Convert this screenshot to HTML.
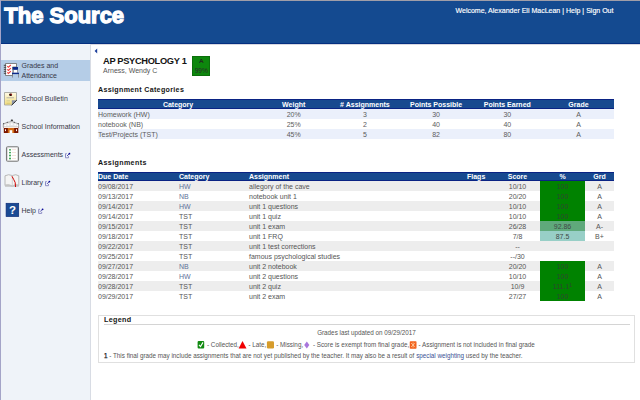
<!DOCTYPE html>
<html><head><meta charset="utf-8">
<style>
*{margin:0;padding:0;box-sizing:border-box}
html,body{width:640px;height:400px;overflow:hidden;background:#fff;font-family:"Liberation Sans",sans-serif;color:#444}
.a{position:absolute;white-space:nowrap}
#frameT{position:absolute;left:0;top:0;width:640px;height:1px;background:#a09ea8}
#frameL{position:absolute;left:0;top:0;width:1px;height:400px;background:#a4a4c8}
#hdr{position:absolute;left:1px;top:1px;width:639px;height:43px;background:#144a90;border-bottom:1px solid #042f80}
#hsh{position:absolute;left:91px;top:44px;width:549px;height:1px;background:#d8d8e0}
#logo{left:4.3px;top:3px;font-size:22px;line-height:26px;font-weight:bold;color:#fff;-webkit-text-stroke:1.3px #fff}
#welcome{left:455.5px;top:6.3px;font-size:7.03px;line-height:9px;color:#fff;-webkit-text-stroke:0.15px #fff}
#side{position:absolute;left:1px;top:44px;width:89px;height:356px;background:#eff3f9}
#sideB{position:absolute;left:90px;top:44px;width:1px;height:356px;background:#d8dce4}
#act{position:absolute;left:1px;top:60px;width:89px;height:20.5px;background:#b5cde7}
.nt{font-size:7px;line-height:10px;color:#383848;left:21.5px}
th,td{padding:0}
.hd{position:absolute;background:#17498f;border-top:1px solid #0a2384;border-bottom:1px solid #0a2384;color:#fff;font-weight:bold;font-size:7px}
.c{position:absolute;text-align:center;font-size:7px;white-space:nowrap}
.l{position:absolute;text-align:left;font-size:7px;white-space:nowrap}
.row{position:absolute}
.lnk{color:#5f7399}
</style></head><body>
<div id="frameT"></div><div id="frameL"></div>
<div id="hdr"></div><div id="hsh"></div>
<div class="a" id="logo">The Source</div>
<div class="a" id="welcome">Welcome, Alexander Eli MacLean | Help | Sign Out</div>
<div id="side"></div><div id="sideB"></div>
<div id="act"></div>

<div class="a nt" style="top:61.3px">Grades and</div>
<div class="a nt" style="top:71.3px">Attendance</div>
<div class="a nt" style="top:93.5px">School Bulletin</div>
<div class="a nt" style="top:121.5px">School Information</div>
<div class="a nt" style="top:149.5px">Assessments</div>
<div class="a nt" style="top:177.5px">Library</div>
<div class="a nt" style="top:205.5px">Help</div>
<svg class="a" style="left:0;top:0" width="640" height="400" viewBox="0 0 640 400">
<!-- grades icon -->
<path d="M5.5 63.5 H16.5 V67 H12.5 V75.5 H5.5 Z" fill="#fff" stroke="#6a6a6a" stroke-width="0.8"/>
<g stroke="#444" stroke-width="1">
<line x1="3.8" y1="65.3" x2="6.2" y2="65.3"/><line x1="3.8" y1="67.3" x2="6.2" y2="67.3"/><line x1="3.8" y1="69.3" x2="6.2" y2="69.3"/><line x1="3.8" y1="71.3" x2="6.2" y2="71.3"/><line x1="3.8" y1="73.3" x2="6.2" y2="73.3"/>
</g>
<g stroke="#f03c3c" stroke-width="1.15" fill="none">
<path d="M7.3 66.2 L8.4 67.3 L10.8 65"/><path d="M7.3 69.4 L8.4 70.5 L10.8 68.2"/><path d="M7.3 72.4 L8.4 73.5 L10.8 71.2"/>
</g>
<rect x="12.6" y="69.8" width="5.2" height="3" fill="#fff"/>
<rect x="12.8" y="67" width="5.2" height="2.8" fill="#0c2a8a"/>
<rect x="13" y="69.8" width="0.8" height="3" fill="#888"/><rect x="17" y="69.8" width="0.8" height="3" fill="#888"/>
<rect x="12" y="72.7" width="7" height="1.4" fill="#0c2a8a"/>
<rect x="12.2" y="74" width="0.7" height="3.6" fill="#777"/><rect x="18" y="74" width="0.7" height="3.6" fill="#777"/>
<!-- bulletin -->
<defs><linearGradient id="yl" x1="0" y1="0" x2="0" y2="1"><stop offset="0" stop-color="#fffbe8"/><stop offset="1" stop-color="#f2dd7a"/></linearGradient></defs>
<path d="M4.5 92.5 H16.5 V100.5 L12 105 H4.5 Z" fill="url(#yl)" stroke="#a8a8a0" stroke-width="0.9"/>
<path d="M16.5 100.3 L11.8 105 L11.8 100.3 Z" fill="#8c94a8"/>
<path d="M16.8 100.2 L11.6 105.2" stroke="#222" stroke-width="0.9"/>
<ellipse cx="10.6" cy="94.8" rx="1.5" ry="1.2" fill="#2a0404"/><circle cx="11.3" cy="94.3" r="0.6" fill="#d02020"/>
<rect x="6.5" y="97.2" width="7.5" height="1.1" fill="#bdb8a8"/>
<rect x="6.5" y="100.4" width="3.5" height="0.9" fill="#d0c890"/>
<rect x="6.5" y="102.8" width="4" height="0.8" fill="#d0c070"/>
<!-- school -->
<ellipse cx="11.9" cy="120.3" rx="1.2" ry="0.8" fill="#222"/>
<path d="M3.3 127.2 V123.9 L7.2 122.4 L11.9 121.4 L14.6 122.4 L18.6 123.9 V127.2 Z" fill="#e6e6e6" stroke="#8c8c8c" stroke-width="0.7"/>
<g fill="#fff"><rect x="4.5" y="124.6" width="1.6" height="1.5"/><rect x="7.6" y="124" width="1.6" height="1.5"/><rect x="10.9" y="123.4" width="1.8" height="1.5"/><rect x="14.4" y="124" width="1.6" height="1.5"/><rect x="16.8" y="124.6" width="1.2" height="1.5"/></g>
<g fill="#555"><circle cx="3.6" cy="123.7" r="0.65"/><circle cx="7.3" cy="122.3" r="0.65"/><circle cx="14.3" cy="122.3" r="0.65"/><circle cx="18.3" cy="123.7" r="0.65"/></g>
<rect x="3.8" y="127" width="14.5" height="6" fill="#7a1600"/>
<rect x="7.8" y="128" width="6.4" height="5" fill="#d26a12"/>
<rect x="4" y="126.8" width="14" height="1.2" fill="#f6eee8"/>
<g fill="#fff"><rect x="5" y="129.3" width="1" height="1.8"/><rect x="16" y="129.3" width="1" height="1.8"/><rect x="9.6" y="130.2" width="2.7" height="2.8"/></g>
<!-- assessments -->
<rect x="6.5" y="146.8" width="12" height="14.5" rx="1.5" fill="#fff" stroke="#7a7a7a" stroke-width="1.1"/>
<rect x="7.6" y="147.8" width="9.8" height="12.5" fill="none" stroke="#ccc" stroke-width="0.6"/>
<g fill="#1a9a3a"><circle cx="10" cy="149.8" r="0.9"/><circle cx="10" cy="152.6" r="0.9"/><circle cx="10" cy="155.5" r="0.9"/><circle cx="10" cy="158.5" r="0.9"/></g>
<g fill="#f4dcd6"><rect x="12" y="149.3" width="4" height="0.8"/><rect x="12" y="152.2" width="4" height="0.8"/><rect x="12" y="155" width="4" height="0.8"/><rect x="12" y="158" width="4" height="0.8"/></g>
<!-- library -->
<path d="M5 175.8 Q8.5 173.8 12.3 175.5 Q16 173.8 18.8 175.8 L18.8 185.5 Q15.5 184.5 12.3 186.2 Q8.8 184.5 5 185.5 Z" fill="#f4f4f4" stroke="#b0b0b0" stroke-width="0.9"/>
<path d="M5 184.5 Q8.8 183.5 12.3 185.5 Q15.5 183.5 18.8 184.5 L18.8 186.8 L5 186.8 Z" fill="#c4c4c4"/>
<line x1="12.3" y1="175.5" x2="12.3" y2="185.5" stroke="#c8c8c8" stroke-width="0.8"/>
<path d="M12 176.3 Q14 180 15.2 182.5 L15.5 187" stroke="#d00000" stroke-width="1" fill="none"/>
<!-- help -->
<rect x="6.1" y="203.3" width="12.6" height="13.2" fill="#1a4a94" stroke="#0c2c78" stroke-width="0.7"/>
<text x="12.4" y="214.2" text-anchor="middle" font-family="Liberation Sans" font-weight="bold" font-size="11.5" fill="#fff">?</text>
<!-- external link icons -->
<g transform="translate(65,153.2)">
<path d="M1.8 0.5 H0.5 V4.6 H3.5 V3" fill="none" stroke="#8c8cc4" stroke-width="1"/>
<path d="M2 2.8 L4.5 0.3" stroke="#3a3aa0" stroke-width="0.9"/><circle cx="4.4" cy="0.5" r="0.9" fill="#0a0a9a"/>
</g>
<g transform="translate(45,181.1)">
<path d="M1.8 0.5 H0.5 V4.6 H3.5 V3" fill="none" stroke="#8c8cc4" stroke-width="1"/>
<path d="M2 2.8 L4.5 0.3" stroke="#3a3aa0" stroke-width="0.9"/><circle cx="4.4" cy="0.5" r="0.9" fill="#0a0a9a"/>
</g>
<g transform="translate(38.2,208.8)">
<path d="M1.8 0.5 H0.5 V4.6 H3.5 V3" fill="none" stroke="#8c8cc4" stroke-width="1"/>
<path d="M2 2.8 L4.5 0.3" stroke="#3a3aa0" stroke-width="0.9"/><circle cx="4.4" cy="0.5" r="0.9" fill="#0a0a9a"/>
</g>
</svg>
<svg class="a" style="left:94px;top:48px" width="4" height="6" viewBox="0 0 4 6"><path d="M3.2 0.6 L0.6 3 L3.2 5.4 Z" fill="#1d3f9c"/></svg>
<div class="a" style="left:103px;top:55.5px;font-size:9.3px;letter-spacing:-0.33px;line-height:10px;font-weight:bold;color:#151515">AP PSYCHOLOGY 1</div>
<div class="a" style="left:103px;top:65.5px;font-size:7px;line-height:9px;color:#555">Arness, Wendy C</div>
<div class="a" style="left:192px;top:56px;width:18.3px;height:19.8px;background:#0d870d;border:1px solid #0b6f0b"></div>
<div class="a" style="left:192px;top:56.5px;width:18.5px;text-align:center;font-size:6.2px;line-height:7px;color:#222;-webkit-text-stroke:0.2px #222">A</div>
<div class="a" style="left:192px;top:66.5px;width:18.5px;text-align:center;font-size:6.6px;line-height:7px;color:#2a2a2a">99%</div>
<div class="a" style="left:98px;top:85.5px;font-size:7.1px;letter-spacing:0.33px;line-height:9px;font-weight:bold;color:#151515">Assignment Categories</div>
<div class="hd" style="left:98px;top:99px;width:516px;height:10px"></div>
<div class="c" style="left:98px;top:99.6px;width:160.1px;line-height:10px;color:#fff;font-weight:bold">Category</div>
<div class="c" style="left:258.1px;top:99.6px;width:71.2px;line-height:10px;color:#fff;font-weight:bold">Weight</div>
<div class="c" style="left:329.3px;top:99.6px;width:71.2px;line-height:10px;color:#fff;font-weight:bold"># Assignments</div>
<div class="c" style="left:400.5px;top:99.6px;width:71.2px;line-height:10px;color:#fff;font-weight:bold">Points Possible</div>
<div class="c" style="left:471.7px;top:99.6px;width:71.2px;line-height:10px;color:#fff;font-weight:bold">Points Earned</div>
<div class="c" style="left:542.9px;top:99.6px;width:71.2px;line-height:10px;color:#fff;font-weight:bold">Grade</div>
<div class="row" style="left:98px;top:109.0px;width:516px;height:9.85px;background:#ebf0fb"></div>
<div class="l" style="left:98px;top:109.8px;line-height:9.85px;color:#5c5c5c">Homework (HW)</div>
<div class="c" style="left:258.1px;top:109.8px;width:71.2px;line-height:9.85px;color:#5c5c5c">20%</div>
<div class="c" style="left:329.3px;top:109.8px;width:71.2px;line-height:9.85px;color:#5c5c5c">3</div>
<div class="c" style="left:400.5px;top:109.8px;width:71.2px;line-height:9.85px;color:#5c5c5c">30</div>
<div class="c" style="left:471.7px;top:109.8px;width:71.2px;line-height:9.85px;color:#5c5c5c">30</div>
<div class="c" style="left:542.9px;top:109.8px;width:71.2px;line-height:9.85px;color:#5c5c5c">A</div>
<div class="row" style="left:98px;top:118.8px;width:516px;height:9.85px;background:#ffffff"></div>
<div class="l" style="left:98px;top:119.6px;line-height:9.85px;color:#5c5c5c">notebook (NB)</div>
<div class="c" style="left:258.1px;top:119.6px;width:71.2px;line-height:9.85px;color:#5c5c5c">25%</div>
<div class="c" style="left:329.3px;top:119.6px;width:71.2px;line-height:9.85px;color:#5c5c5c">2</div>
<div class="c" style="left:400.5px;top:119.6px;width:71.2px;line-height:9.85px;color:#5c5c5c">40</div>
<div class="c" style="left:471.7px;top:119.6px;width:71.2px;line-height:9.85px;color:#5c5c5c">40</div>
<div class="c" style="left:542.9px;top:119.6px;width:71.2px;line-height:9.85px;color:#5c5c5c">A</div>
<div class="row" style="left:98px;top:128.7px;width:516px;height:9.85px;background:#ebf0fb"></div>
<div class="l" style="left:98px;top:129.5px;line-height:9.85px;color:#5c5c5c">Test/Projects (TST)</div>
<div class="c" style="left:258.1px;top:129.5px;width:71.2px;line-height:9.85px;color:#5c5c5c">45%</div>
<div class="c" style="left:329.3px;top:129.5px;width:71.2px;line-height:9.85px;color:#5c5c5c">5</div>
<div class="c" style="left:400.5px;top:129.5px;width:71.2px;line-height:9.85px;color:#5c5c5c">82</div>
<div class="c" style="left:471.7px;top:129.5px;width:71.2px;line-height:9.85px;color:#5c5c5c">80</div>
<div class="c" style="left:542.9px;top:129.5px;width:71.2px;line-height:9.85px;color:#5c5c5c">A</div>
<div class="a" style="left:98px;top:159px;font-size:7.1px;letter-spacing:0.38px;line-height:9px;font-weight:bold;color:#151515">Assignments</div>
<div class="hd" style="left:98px;top:172px;width:516px;height:9px"></div>
<div class="l" style="left:98px;top:172px;line-height:9px;color:#fff;font-weight:bold">Due Date</div>
<div class="l" style="left:179px;top:172px;line-height:9px;color:#fff;font-weight:bold">Category</div>
<div class="l" style="left:249px;top:172px;line-height:9px;color:#fff;font-weight:bold">Assignment</div>
<div class="l" style="left:467px;top:172px;line-height:9px;color:#fff;font-weight:bold">Flags</div>
<div class="c" style="left:500px;top:172px;width:35px;line-height:9px;color:#fff;font-weight:bold">Score</div>
<div class="c" style="left:540px;top:172px;width:45px;line-height:9px;color:#fff;font-weight:bold">%</div>
<div class="c" style="left:585px;top:172px;width:29px;line-height:9px;color:#fff;font-weight:bold">Grd</div>
<div class="row" style="left:98px;top:181.00px;width:516px;height:10.0px;background:#ededed"></div>
<div class="row" style="left:540px;top:181.00px;width:45px;height:10.0px;background:#008200"></div>
<div class="l" style="left:98px;top:182.00px;line-height:10.0px;color:#555">09/08/2017</div>
<div class="l lnk" style="left:179px;top:182.00px;line-height:10.0px;">HW</div>
<div class="l" style="left:249px;top:182.00px;line-height:10.0px;color:#555">allegory of the cave</div>
<div class="c" style="left:500px;top:182.00px;width:35px;line-height:10.0px;color:#555">10/10</div>
<div class="c" style="left:540px;top:182.00px;width:45px;line-height:10.0px;color:#2f452f">100</div>
<div class="c" style="left:585px;top:182.00px;width:29px;line-height:10.0px;color:#555">A</div>
<div class="row" style="left:98px;top:191.00px;width:516px;height:10.0px;background:#ffffff"></div>
<div class="row" style="left:540px;top:191.00px;width:45px;height:10.0px;background:#008200"></div>
<div class="l" style="left:98px;top:192.00px;line-height:10.0px;color:#555">09/13/2017</div>
<div class="l lnk" style="left:179px;top:192.00px;line-height:10.0px;">NB</div>
<div class="l" style="left:249px;top:192.00px;line-height:10.0px;color:#555">notebook unit 1</div>
<div class="c" style="left:500px;top:192.00px;width:35px;line-height:10.0px;color:#555">20/20</div>
<div class="c" style="left:540px;top:192.00px;width:45px;line-height:10.0px;color:#2f452f">100</div>
<div class="c" style="left:585px;top:192.00px;width:29px;line-height:10.0px;color:#555">A</div>
<div class="row" style="left:98px;top:201.00px;width:516px;height:10.0px;background:#ededed"></div>
<div class="row" style="left:540px;top:201.00px;width:45px;height:10.0px;background:#008200"></div>
<div class="l" style="left:98px;top:202.00px;line-height:10.0px;color:#555">09/14/2017</div>
<div class="l lnk" style="left:179px;top:202.00px;line-height:10.0px;">HW</div>
<div class="l" style="left:249px;top:202.00px;line-height:10.0px;color:#555">unit 1 questions</div>
<div class="c" style="left:500px;top:202.00px;width:35px;line-height:10.0px;color:#555">10/10</div>
<div class="c" style="left:540px;top:202.00px;width:45px;line-height:10.0px;color:#2f452f">100</div>
<div class="c" style="left:585px;top:202.00px;width:29px;line-height:10.0px;color:#555">A</div>
<div class="row" style="left:98px;top:211.00px;width:516px;height:10.0px;background:#ffffff"></div>
<div class="row" style="left:540px;top:211.00px;width:45px;height:10.0px;background:#008200"></div>
<div class="l" style="left:98px;top:212.00px;line-height:10.0px;color:#555">09/14/2017</div>
<div class="l" style="left:179px;top:212.00px;line-height:10.0px;color:#555">TST</div>
<div class="l" style="left:249px;top:212.00px;line-height:10.0px;color:#555">unit 1 quiz</div>
<div class="c" style="left:500px;top:212.00px;width:35px;line-height:10.0px;color:#555">10/10</div>
<div class="c" style="left:540px;top:212.00px;width:45px;line-height:10.0px;color:#2f452f">100</div>
<div class="c" style="left:585px;top:212.00px;width:29px;line-height:10.0px;color:#555">A</div>
<div class="row" style="left:98px;top:221.00px;width:516px;height:10.0px;background:#ededed"></div>
<div class="row" style="left:540px;top:221.00px;width:45px;height:10.0px;background:#5fa97b"></div>
<div class="l" style="left:98px;top:222.00px;line-height:10.0px;color:#555">09/15/2017</div>
<div class="l" style="left:179px;top:222.00px;line-height:10.0px;color:#555">TST</div>
<div class="l" style="left:249px;top:222.00px;line-height:10.0px;color:#555">unit 1 exam</div>
<div class="c" style="left:500px;top:222.00px;width:35px;line-height:10.0px;color:#555">26/28</div>
<div class="c" style="left:540px;top:222.00px;width:45px;line-height:10.0px;color:#404848">92.86</div>
<div class="c" style="left:585px;top:222.00px;width:29px;line-height:10.0px;color:#555">A-</div>
<div class="row" style="left:98px;top:231.00px;width:516px;height:10.0px;background:#ffffff"></div>
<div class="row" style="left:540px;top:231.00px;width:45px;height:10.0px;background:#98cfc7"></div>
<div class="l" style="left:98px;top:232.00px;line-height:10.0px;color:#555">09/18/2017</div>
<div class="l" style="left:179px;top:232.00px;line-height:10.0px;color:#555">TST</div>
<div class="l" style="left:249px;top:232.00px;line-height:10.0px;color:#555">unit 1 FRQ</div>
<div class="c" style="left:500px;top:232.00px;width:35px;line-height:10.0px;color:#555">7/8</div>
<div class="c" style="left:540px;top:232.00px;width:45px;line-height:10.0px;color:#404848">87.5</div>
<div class="c" style="left:585px;top:232.00px;width:29px;line-height:10.0px;color:#555">B+</div>
<div class="row" style="left:98px;top:241.00px;width:516px;height:10.0px;background:#ededed"></div>
<div class="l" style="left:98px;top:242.00px;line-height:10.0px;color:#555">09/22/2017</div>
<div class="l" style="left:179px;top:242.00px;line-height:10.0px;color:#555">TST</div>
<div class="l" style="left:249px;top:242.00px;line-height:10.0px;color:#555">unit 1 test corrections</div>
<div class="c" style="left:500px;top:242.00px;width:35px;line-height:10.0px;color:#555">--</div>
<div class="row" style="left:98px;top:251.00px;width:516px;height:10.0px;background:#ffffff"></div>
<div class="l" style="left:98px;top:252.00px;line-height:10.0px;color:#555">09/25/2017</div>
<div class="l" style="left:179px;top:252.00px;line-height:10.0px;color:#555">TST</div>
<div class="l" style="left:249px;top:252.00px;line-height:10.0px;color:#555">famous psychological studies</div>
<div class="c" style="left:500px;top:252.00px;width:35px;line-height:10.0px;color:#555">--/30</div>
<div class="row" style="left:98px;top:261.00px;width:516px;height:10.0px;background:#ededed"></div>
<div class="row" style="left:540px;top:261.00px;width:45px;height:10.0px;background:#008200"></div>
<div class="l" style="left:98px;top:262.00px;line-height:10.0px;color:#555">09/27/2017</div>
<div class="l lnk" style="left:179px;top:262.00px;line-height:10.0px;">NB</div>
<div class="l" style="left:249px;top:262.00px;line-height:10.0px;color:#555">unit 2 notebook</div>
<div class="c" style="left:500px;top:262.00px;width:35px;line-height:10.0px;color:#555">20/20</div>
<div class="c" style="left:540px;top:262.00px;width:45px;line-height:10.0px;color:#2f452f">100</div>
<div class="c" style="left:585px;top:262.00px;width:29px;line-height:10.0px;color:#555">A</div>
<div class="row" style="left:98px;top:271.00px;width:516px;height:10.0px;background:#ffffff"></div>
<div class="row" style="left:540px;top:271.00px;width:45px;height:10.0px;background:#008200"></div>
<div class="l" style="left:98px;top:272.00px;line-height:10.0px;color:#555">09/28/2017</div>
<div class="l lnk" style="left:179px;top:272.00px;line-height:10.0px;">HW</div>
<div class="l" style="left:249px;top:272.00px;line-height:10.0px;color:#555">unit 2 questions</div>
<div class="c" style="left:500px;top:272.00px;width:35px;line-height:10.0px;color:#555">10/10</div>
<div class="c" style="left:540px;top:272.00px;width:45px;line-height:10.0px;color:#2f452f">100</div>
<div class="c" style="left:585px;top:272.00px;width:29px;line-height:10.0px;color:#555">A</div>
<div class="row" style="left:98px;top:281.00px;width:516px;height:10.0px;background:#ededed"></div>
<div class="row" style="left:540px;top:281.00px;width:45px;height:10.0px;background:#008200"></div>
<div class="l" style="left:98px;top:282.00px;line-height:10.0px;color:#555">09/28/2017</div>
<div class="l" style="left:179px;top:282.00px;line-height:10.0px;color:#555">TST</div>
<div class="l" style="left:249px;top:282.00px;line-height:10.0px;color:#555">unit 2 quiz</div>
<div class="c" style="left:500px;top:282.00px;width:35px;line-height:10.0px;color:#555">10/9</div>
<div class="c" style="left:540px;top:282.00px;width:45px;line-height:10.0px;color:#2f452f">111.1<span style="font-size:5px;position:relative;top:-1.8px">1</span></div>
<div class="c" style="left:585px;top:282.00px;width:29px;line-height:10.0px;color:#555">A</div>
<div class="row" style="left:98px;top:291.00px;width:516px;height:10.0px;background:#ffffff"></div>
<div class="row" style="left:540px;top:291.00px;width:45px;height:10.0px;background:#008200"></div>
<div class="l" style="left:98px;top:292.00px;line-height:10.0px;color:#555">09/29/2017</div>
<div class="l" style="left:179px;top:292.00px;line-height:10.0px;color:#555">TST</div>
<div class="l" style="left:249px;top:292.00px;line-height:10.0px;color:#555">unit 2 exam</div>
<div class="c" style="left:500px;top:292.00px;width:35px;line-height:10.0px;color:#555">27/27</div>
<div class="c" style="left:540px;top:292.00px;width:45px;line-height:10.0px;color:#2f452f">100</div>
<div class="c" style="left:585px;top:292.00px;width:29px;line-height:10.0px;color:#555">A</div>
<div class="a" style="left:98px;top:315px;width:537px;height:47.5px;border:1px solid #e0e0e0"></div>
<div class="a" style="left:104px;top:315px;font-size:7.2px;letter-spacing:0.3px;line-height:9px;font-weight:bold;color:#151515">Legend</div>
<div class="a" style="left:104px;top:324px;width:526px;height:1px;background:#d4d4d4"></div>
<div class="a" style="left:98px;top:328.5px;width:537px;text-align:center;font-size:6.3px;line-height:8px;color:#555">Grades last updated on 09/29/2017</div>
<div class="a" style="left:207px;top:340.6px;font-size:6.3px;line-height:8px;color:#555">- Collected,</div>
<div class="a" style="left:248.5px;top:340.6px;font-size:6.3px;line-height:8px;color:#555">- Late,</div>
<div class="a" style="left:276.2px;top:340.6px;font-size:6.3px;line-height:8px;color:#555">- Missing,</div>
<div class="a" style="left:312.9px;top:340.6px;font-size:6.3px;line-height:8px;color:#555">- Score is exempt from final grade,</div>
<div class="a" style="left:418.6px;top:340.6px;font-size:6.3px;line-height:8px;color:#555">- Assignment is not included in final grade</div>
<div class="a" style="left:104px;top:351.7px;font-size:6.3px;line-height:8px;color:#555"><b style="color:#222;font-weight:normal;-webkit-text-stroke:0.25px #222">1</b> - This final grade may include assignments that are not yet published by the teacher. It may also be a result of <span style="color:#3a5294">special weighting</span> used by the teacher.</div>
<svg class="a" style="left:0;top:0" width="640" height="400" viewBox="0 0 640 400">
<rect x="197.6" y="341.1" width="6.6" height="7.5" rx="1" fill="#128a12"/>
<path d="M199 344.8 L200.5 346.6 L203 342.4" stroke="#fff" stroke-width="1.1" fill="none"/>
<path d="M242.5 341 L246.5 348.6 L238.6 348.6 Z" fill="#f00000"/>
<rect x="266.9" y="341.25" width="7.1" height="7.25" rx="1.2" fill="#d69c2c"/>
<path d="M306.8 341.5 L309.4 345 L306.8 348.5 L304.2 345 Z" fill="#a876dc"/>
<rect x="409.75" y="341.25" width="6.75" height="7.5" rx="0.8" fill="#f2601a"/>
<path d="M411 343 L415.2 347 M415.2 343 L411 347 M413.1 342.4 V347.6" stroke="#ffd8b0" stroke-width="0.7"/>
</svg>
</body></html>
